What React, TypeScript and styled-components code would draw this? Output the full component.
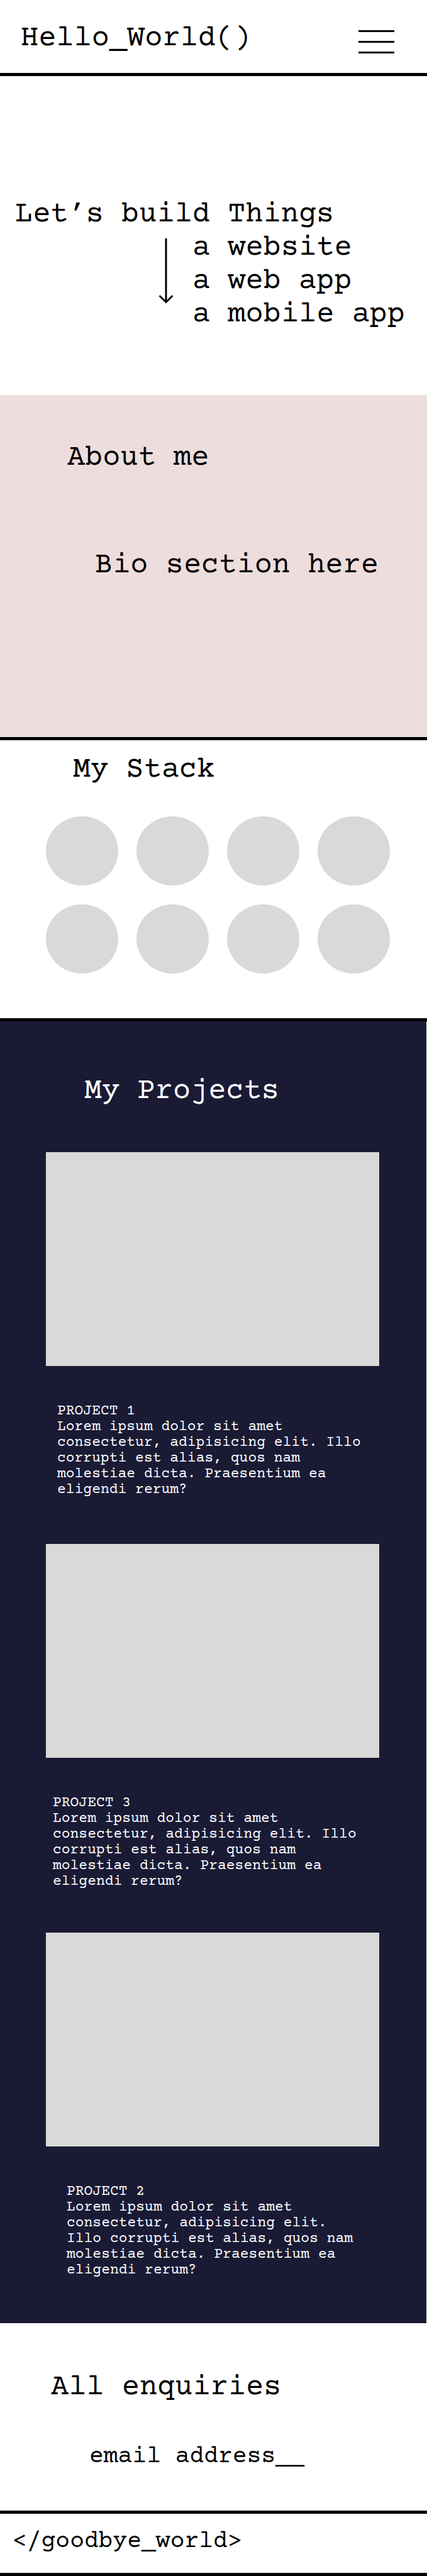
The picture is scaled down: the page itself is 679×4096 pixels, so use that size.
import React from "react";
import styled, { createGlobalStyle } from "styled-components";

const GlobalStyle = createGlobalStyle`
  * { box-sizing: border-box; }
  body {
    margin: 0;
    background: #ffffff;
    color: #000000;
    font-family: "Courier Prime", "Liberation Mono", monospace;
    font-size: 47px;
    line-height: 53px;
  }
  h1, h2, h3, p, ul { margin: 0; padding: 0; font: inherit; }
  ul { list-style: none; }
  a { color: inherit; text-decoration: none; }
`;

const Header = styled.header`
  display: flex;
  justify-content: space-between;
  align-items: flex-end;
  padding: 35px 52px 28px 33px;
  border-bottom: 5px solid #000000;
`;

const MenuButton = styled.button`
  display: flex;
  flex-direction: column;
  gap: 14px;
  width: 57px;
  padding: 0 0 3px;
  border: 0;
  background: none;
  cursor: pointer;
`;

const MenuBar = styled.span`
  width: 100%;
  height: 3px;
  background: #000000;
`;

const Hero = styled.section`
  padding: 194px 0 101px 24px;
`;

const HeroOptions = styled.div`
  display: flex;
  gap: 30px;
  padding-left: 228px;
`;

const Arrow = styled.svg`
  flex: none;
  width: 24px;
  height: 104px;
  margin-top: 11px;
`;

const About = styled.section`
  padding: 74px 0 246px 107px;
  background: #eedddd;
  border-bottom: 5px solid #000000;
`;

const Bio = styled.p`
  padding: 118px 0 0 44px;
`;

const Stack = styled.section`
  padding: 21px 59px 71px 73px;
  border-bottom: 5px solid #000000;
`;

const StackTitle = styled.h2`
  padding: 0 0 47px 43px;
`;

const StackGrid = styled.ul`
  display: grid;
  grid-template-columns: repeat(4, 1fr);
  gap: 30px 29px;
`;

const StackItem = styled.li`
  height: 110px;
  border-radius: 50%;
  background: #d9d9d9;
`;

const Projects = styled.section`
  margin-right: 1px;
  padding: 85px 75px 0 73px;
  background: #1a1a35;
  color: #ffffff;
`;

const ProjectsTitle = styled.h2`
  padding: 0 0 70px 61px;
`;

const Project = styled.article<{ $after: number }>`
  padding-bottom: ${(p) => p.$after}px;
`;

const Preview = styled.div`
  height: 340px;
  background: #d9d9d9;
`;

const Summary = styled.div<{ $indent: number; $chars: number }>`
  max-width: ${(p) => p.$chars}ch;
  margin: 60px 0 0 ${(p) => p.$indent}px;
  font-size: 23px;
  line-height: 25px;
`;

const Enquiries = styled.section`
  padding: 76px 0 64px 81px;
  border-bottom: 5px solid #000000;
`;

const EmailLink = styled.a`
  display: block;
  padding: 62px 0 0 61px;
  font-size: 38px;
  line-height: 43px;
`;

const Footer = styled.footer`
  padding: 23px 20px 28px;
  border-bottom: 5px solid #000000;
  font-size: 38px;
  line-height: 43px;
`;

const blurb =
  "Lorem ipsum dolor sit amet consectetur, adipisicing elit. Illo corrupti est alias, quos nam molestiae dicta. Praesentium ea eligendi rerum?";

const projects = [
  { name: "PROJECT 1", indent: 18, chars: 36, after: 73 },
  { name: "PROJECT 3", indent: 11, chars: 36, after: 68 },
  { name: "PROJECT 2", indent: 33, chars: 34, after: 71 },
];

const stack = [1, 2, 3, 4, 5, 6, 7, 8];

export default function App() {
  return (
    <>
      <GlobalStyle />
      <Header>
        <h1>Hello_World()</h1>
        <MenuButton type="button" aria-label="Menu">
          <MenuBar />
          <MenuBar />
          <MenuBar />
        </MenuButton>
      </Header>
      <main>
        <Hero>
          <h2>Let’s build Things</h2>
          <HeroOptions>
            <Arrow
              viewBox="0 0 24 104"
              fill="none"
              stroke="#000000"
              strokeWidth="3"
              aria-hidden="true"
            >
              <path d="M12 0V101" />
              <path d="M2.5 92L12 101.5L21.5 92" strokeLinecap="round" />
            </Arrow>
            <ul>
              <li>a website</li>
              <li>a web app</li>
              <li>a mobile app</li>
            </ul>
          </HeroOptions>
        </Hero>
        <About>
          <h2>About me</h2>
          <Bio>Bio section here</Bio>
        </About>
        <Stack>
          <StackTitle>My Stack</StackTitle>
          <StackGrid>
            {stack.map((n) => (
              <StackItem key={n} />
            ))}
          </StackGrid>
        </Stack>
        <Projects>
          <ProjectsTitle>My Projects</ProjectsTitle>
          {projects.map((p) => (
            <Project key={p.name} $after={p.after}>
              <Preview />
              <Summary $indent={p.indent} $chars={p.chars}>
                <h3>{p.name}</h3>
                <p>{blurb}</p>
              </Summary>
            </Project>
          ))}
        </Projects>
        <Enquiries>
          <h2>All enquiries</h2>
          <EmailLink href="mailto:">email address__</EmailLink>
        </Enquiries>
      </main>
      <Footer>&lt;/goodbye_world&gt;</Footer>
    </>
  );
}
